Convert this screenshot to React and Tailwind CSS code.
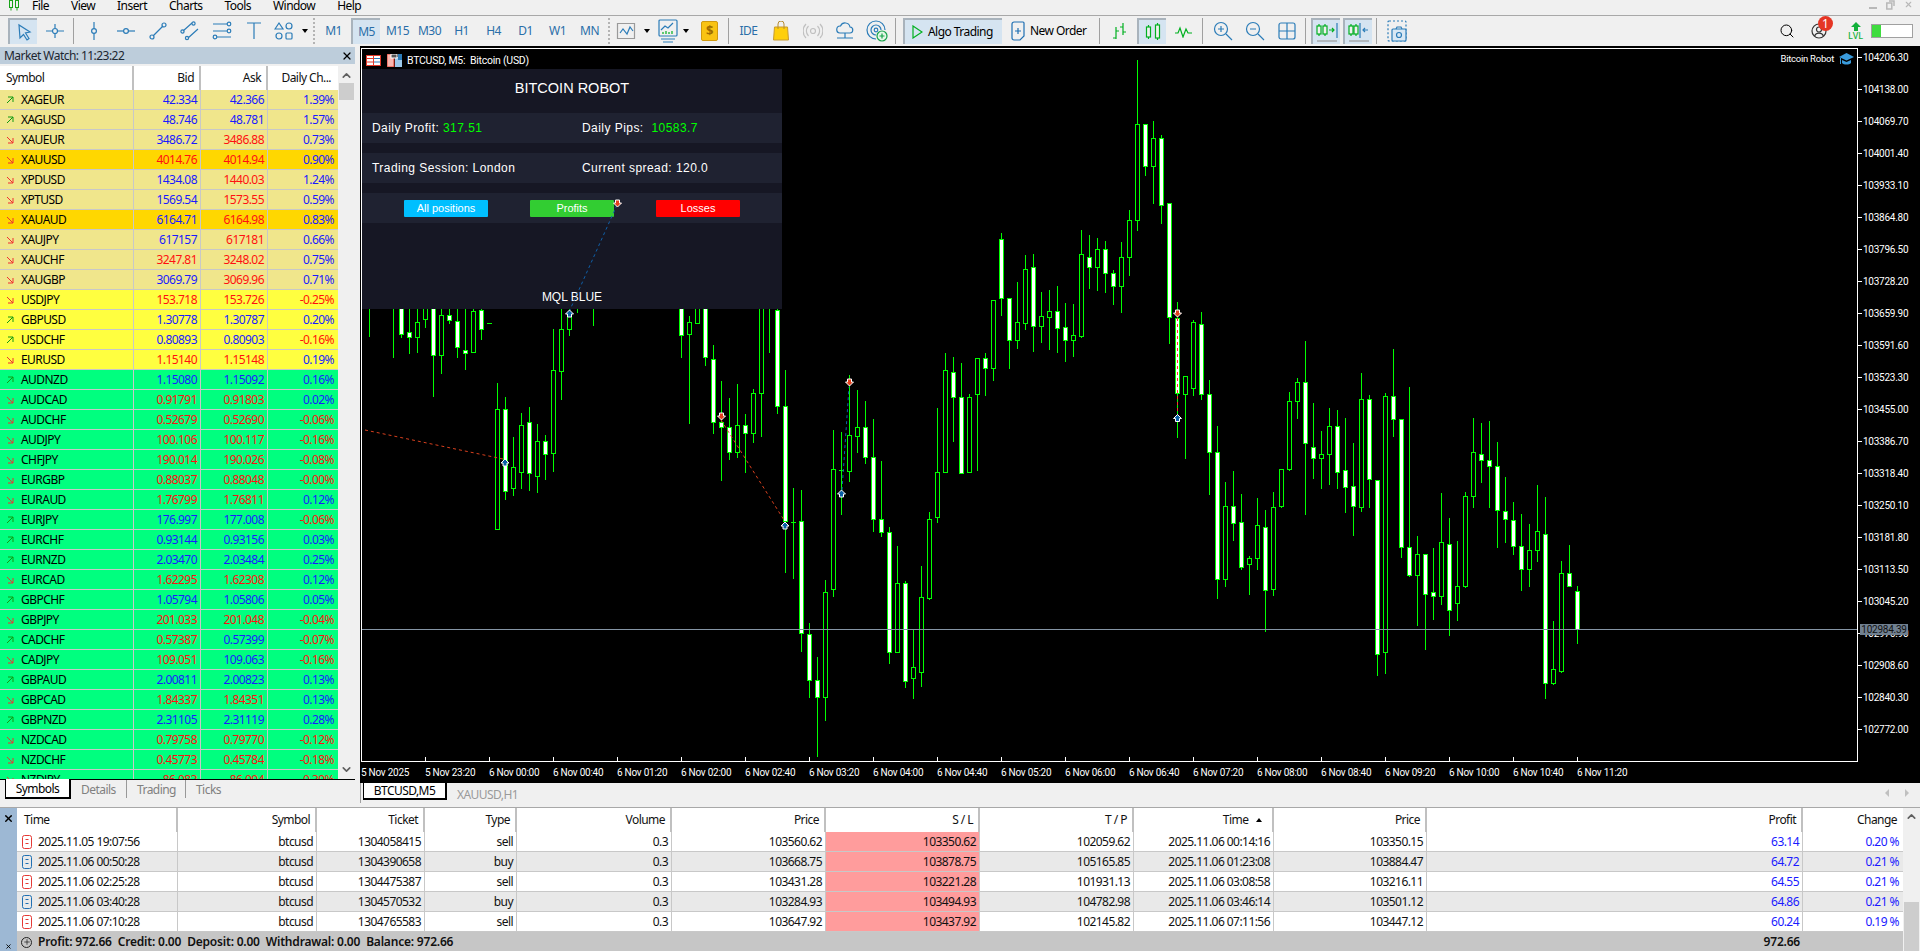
import { ChevronUp, ChevronDown, Search, X, Plus } from 'lucide-react';

const BLUE = '#2b7cb8';
const GREEN = '#00b020';

// symbol, up?, bid, ask, change, colours (b = blue, r = red), row background
const KHAKI = 'bg-[#f0e68c]';
const GOLD = 'bg-[#ffd700]';
const YELLOW = 'bg-[#ffff40]';
const SPRING = 'bg-[#00ff7f]';
const symbols = [
  ['XAGEUR', 1, '42.334', '42.366', '1.39%', 'bbb', KHAKI],
  ['XAGUSD', 1, '48.746', '48.781', '1.57%', 'bbb', KHAKI],
  ['XAUEUR', 0, '3486.72', '3486.88', '0.73%', 'brb', KHAKI],
  ['XAUUSD', 0, '4014.76', '4014.94', '0.90%', 'rrb', GOLD],
  ['XPDUSD', 0, '1434.08', '1440.03', '1.24%', 'brb', KHAKI],
  ['XPTUSD', 0, '1569.54', '1573.55', '0.59%', 'brb', KHAKI],
  ['XAUAUD', 0, '6164.71', '6164.98', '0.83%', 'brb', GOLD],
  ['XAUJPY', 0, '617157', '617181', '0.66%', 'brb', KHAKI],
  ['XAUCHF', 0, '3247.81', '3248.02', '0.75%', 'rrb', KHAKI],
  ['XAUGBP', 0, '3069.79', '3069.96', '0.71%', 'brb', KHAKI],
  ['USDJPY', 0, '153.718', '153.726', '-0.25%', 'rrr', YELLOW],
  ['GBPUSD', 1, '1.30778', '1.30787', '0.20%', 'bbb', YELLOW],
  ['USDCHF', 1, '0.80893', '0.80903', '-0.16%', 'bbr', YELLOW],
  ['EURUSD', 0, '1.15140', '1.15148', '0.19%', 'rrb', YELLOW],
  ['AUDNZD', 1, '1.15080', '1.15092', '0.16%', 'bbb', SPRING],
  ['AUDCAD', 0, '0.91791', '0.91803', '0.02%', 'rrb', SPRING],
  ['AUDCHF', 0, '0.52679', '0.52690', '-0.06%', 'rrr', SPRING],
  ['AUDJPY', 0, '100.106', '100.117', '-0.16%', 'rrr', SPRING],
  ['CHFJPY', 0, '190.014', '190.026', '-0.08%', 'rrr', SPRING],
  ['EURGBP', 0, '0.88037', '0.88048', '-0.00%', 'rrr', SPRING],
  ['EURAUD', 0, '1.76799', '1.76811', '0.12%', 'rrb', SPRING],
  ['EURJPY', 1, '176.997', '177.008', '-0.06%', 'bbr', SPRING],
  ['EURCHF', 1, '0.93144', '0.93156', '0.03%', 'bbb', SPRING],
  ['EURNZD', 1, '2.03470', '2.03484', '0.25%', 'bbb', SPRING],
  ['EURCAD', 0, '1.62295', '1.62308', '0.12%', 'rrb', SPRING],
  ['GBPCHF', 1, '1.05794', '1.05806', '0.05%', 'bbb', SPRING],
  ['GBPJPY', 0, '201.033', '201.048', '-0.04%', 'rrr', SPRING],
  ['CADCHF', 1, '0.57387', '0.57399', '-0.07%', 'rbr', SPRING],
  ['CADJPY', 0, '109.051', '109.063', '-0.16%', 'rbr', SPRING],
  ['GBPAUD', 1, '2.00811', '2.00823', '0.13%', 'bbb', SPRING],
  ['GBPCAD', 0, '1.84337', '1.84351', '0.13%', 'rrb', SPRING],
  ['GBPNZD', 1, '2.31105', '2.31119', '0.28%', 'bbb', SPRING],
  ['NZDCAD', 0, '0.79758', '0.79770', '-0.12%', 'rrr', SPRING],
  ['NZDCHF', 0, '0.45773', '0.45784', '-0.18%', 'rrr', SPRING],
  ['NZDJPY', 0, '86.083', '86.094', '-0.39%', 'rrr', SPRING],
];

const trades = [
  ['2025.11.05 19:07:56', '1304058415', 'sell', '103560.62', '103350.62', '102059.62', '2025.11.06 00:14:16', '103350.15', '63.14', '0.20 %'],
  ['2025.11.06 00:50:28', '1304390658', 'buy', '103668.75', '103878.75', '105165.85', '2025.11.06 01:23:08', '103884.47', '64.72', '0.21 %'],
  ['2025.11.06 02:25:28', '1304475387', 'sell', '103431.28', '103221.28', '101931.13', '2025.11.06 03:08:58', '103216.11', '64.55', '0.21 %'],
  ['2025.11.06 03:40:28', '1304570532', 'buy', '103284.93', '103494.93', '104782.98', '2025.11.06 03:46:14', '103501.12', '64.86', '0.21 %'],
  ['2025.11.06 07:10:28', '1304765583', 'sell', '103647.92', '103437.92', '102145.82', '2025.11.06 07:11:56', '103447.12', '60.24', '0.19 %'],
];

const prices = ['104206.30', '104138.00', '104069.70', '104001.40', '103933.10', '103864.80', '103796.50', '103728.20', '103659.90', '103591.60', '103523.30', '103455.00', '103386.70', '103318.40', '103250.10', '103181.80', '103113.50', '103045.20', '102976.90', '102908.60', '102840.30', '102772.00'];
const times = ['5 Nov 2025', '5 Nov 23:20', '6 Nov 00:00', '6 Nov 00:40', '6 Nov 01:20', '6 Nov 02:00', '6 Nov 02:40', '6 Nov 03:20', '6 Nov 04:00', '6 Nov 04:40', '6 Nov 05:20', '6 Nov 06:00', '6 Nov 06:40', '6 Nov 07:20', '6 Nov 08:00', '6 Nov 08:40', '6 Nov 09:20', '6 Nov 10:00', '6 Nov 10:40', '6 Nov 11:20'];

// [bar index, wick top, body top, body bottom, wick bottom, white body], read off the crops
const leftBars = [
  [1,0,0,0,107],[4,0,0,0,170],[5,0,0,103,112,1],[6,0,97,112,160,1],[7,0,65,112,155],[8,0,0,58,80],[9,0,0,165,287,1],
  [10,0,46,166,220],[11,0,46,60,70,1],[12,0,62,142,172,1],[13,0,150,160,207,1],[14,0,34,155,155],[15,0,30,88,118,1],[16,70,70,70,70],
  [17,250,328,686,686],[18,292,328,573,597,1],[19,412,502,565,585],[20,340,376,515,565],[21,320,367,520,570,1],[22,372,424,527,575],
  [23,405,424,463,537,1],[24,87,211,458,513],[25,0,88,212,298],[26,0,40,88,105],[27,0,0,0,35],[29,0,0,0,75],
  [40,0,0,106,170,1],[41,48,65,103,368],[42,0,0,68,68],[43,0,0,172,195,1],[44,135,178,365,398,1],[45,243,365,380,540,1],
  [46,293,380,455,477,1],[47,252,376,455,470],[48,343,376,398,515,1],[49,267,280,398,425],[50,0,0,280,408],[51,0,0,0,155],
  [52,0,30,317,340,1],[53,210,317,663,815,1],[54,565,665,665,835],[55,570,664,1000,1052,1],[56,968,1003,1141,1190,1],[57,1072,1141,1192,1367,1],
  [58,840,875,1190,1260],[59,390,508,868,888],[60,396,510,510,642],[61,225,406,513,543],[62,270,382,407,455],[63,303,382,470,488,1],
  [64,357,470,658,693,1],[65,483,658,697,707,1],[66,682,697,1055,1088,1],[67,738,850,1055,1055],[68,842,850,1143,1160,1],[69,988,1102,1135,1193],
  [70,798,892,1117,1157],[71,636,658,893,897],[72,323,517,652,665],[73,160,211,517,517],[74,172,217,292,423,1],[75,190,292,520,520,1],
  [76,282,292,517,517],[77,175,175,281,510],[78,160,175,205,285,1],[79,0,0,205,240],
];
const rightBars = [
  [80,410,421,546,583,1],[81,546,546,635,696,1],[82,513,598,635,652],[83,456,486,600,612],[84,453,482,607,660,1],[85,535,584,607,640],
  [86,530,575,587,655],[87,521,575,611,662,1],[88,557,609,635,681,1],[89,559,626,635,670],[90,403,454,628,630],[91,413,459,482,525,1],
  [92,420,443,481,530],[93,425,443,493,535,1],[94,487,493,522,560,1],[95,428,459,522,576],[96,360,382,459,497],[97,42,179,382,403],
  [98,177,177,268,286,1],[99,172,208,268,345],[100,202,208,349,388,1],[101,346,346,588,642,1],[102,555,590,748,842,1],[103,711,711,751,885],
  [104,593,598,738,752],[105,576,601,751,760,1],[106,720,751,874,962,1],[107,818,874,1143,1183,1],[108,937,988,1143,1158],[109,913,988,1024,1060,1],
  [110,963,1022,1116,1120,1],[111,1093,1098,1111,1173],[112,970,1027,1098,1120],[113,995,1033,1166,1252,1],[114,958,990,1164,1175],[115,908,910,988,990],
  [116,745,764,910,912],[117,716,725,764,800],[118,638,724,855,1005,1],[119,770,863,885,928,1],[120,828,878,885,950],[121,780,817,878,940],
  [122,785,818,916,950,1],[123,802,912,947,1000,1],[124,853,945,988,1048,1],[125,706,760,990,998],[126,752,760,931,990,1],[127,933,933,1302,1345,1],
  [128,748,755,1296,1342],[129,655,755,804,840,1],[130,804,804,1075,1095,1],[131,735,1075,1133,1135,1],[132,1052,1090,1133,1240],[133,1090,1090,1174,1290,1],
  [134,1076,1170,1178,1227,1],[135,960,1063,1178,1195],[136,1012,1068,1207,1260,1],[137,1062,1158,1192,1228],[138,958,966,1156,1160],[139,800,874,966,990],
  [140,812,878,890,937,1],[141,808,889,902,990,1],[142,852,902,995,1075,1],[143,926,997,1016,1063,1],[144,980,1018,1073,1090,1],[145,1005,1073,1120,1165,1],
  [146,1025,1080,1120,1158],[147,943,1040,1080,1104],[148,968,1046,1363,1395,1],[149,1232,1332,1363,1365],[150,1105,1130,1338,1340],[151,1070,1130,1158,1158,1],
  [152,1158,1168,1248,1278,1],
];

const bars = [
  ...leftBars.map(([k, ...r]) => [k, ...r.slice(0, 4).map((v) => 300 + v / 3), r[4]]),
  ...rightBars.map(([k, ...r]) => [k, ...r.slice(0, 4).map((v) => 40 + v / 2.119), r[4]]),
];

function Candle({ k, wt, bt, bb, wb, white }) {
  const x = 361 + 8 * k;
  const top = Math.round(bt);
  const height = Math.round(bb) - top;
  return (
    <g>
      <line x1={x + 0.5} x2={x + 0.5} y1={Math.round(wt)} y2={Math.round(wb) + 1} stroke="#00ff00" />
      {height === 0 ? (
        <line x1={x - 2} x2={x + 3} y1={top + 0.5} y2={top + 0.5} stroke="#00ff00" />
      ) : (
        <rect x={x - 1.5} y={top + 0.5} width="4" height={height} fill={white ? '#fff' : '#000'} stroke="#00ff00" />
      )}
    </g>
  );
}

function Marker({ x, y, up }) {
  const d = up ? 1 : -1;
  const pts = [[0, -4], [4, 0], [2, 0], [2, 3], [-2, 3], [-2, 0], [-4, 0]].map(([a, b]) => `${x + a},${y + b * d}`).join(' ');
  return <polygon points={pts} fill={up ? '#0b5fa5' : '#e2401c'} stroke="#fff" strokeWidth="1" />;
}

function Icon({ w = 20, h = 20, children, className = '' }) {
  return (
    <svg width={w} height={h} viewBox={`0 0 ${w} ${h}`} fill="none" stroke={BLUE} strokeWidth="1.2" className={className}>
      {children}
    </svg>
  );
}

function Btn({ active, w = 'w-[29px]', children }) {
  return (
    <div className={`${w} h-[26px] shrink-0 flex items-center justify-center ${active ? 'bg-[#d5e4f1] border-t-2 border-l-2 border-[#a9b3bc]' : ''} text-[#2a6ea8]`}>
      {children}
    </div>
  );
}

const Sep = ({ className = 'ml-[1px] mr-[2px]' }) => <div className={`w-px h-[26px] bg-[#a0a0a0] shrink-0 ${className}`} />;
const Grip = ({ className }) => <div className={`w-[2px] h-[26px] shrink-0 border-l-2 border-dotted border-[#b4b4b4] ${className}`} />;
const Caret = () => <span className="block w-0 h-0 border-x-[3.5px] border-x-transparent border-t-[4px] border-t-black" />;

function CandleGlyph({ x, top = 4, h = 12 }) {
  return (
    <g stroke={GREEN}>
      <line x1={x} x2={x} y1={top - 2} y2={top + h + 2} />
      <rect x={x - 2} y={top} width="4" height={h} fill="#f0f0f0" />
    </g>
  );
}

function Toolbar() {
  const periods = ['M1', 'M5', 'M15', 'M30', 'H1', 'H4', 'D1', 'W1', 'MN'];
  return (
    <div className="h-[31px] border-t border-[#a8a8a8] flex items-center gap-[3px] pl-[8px] pr-[7px]">
      <Btn active>
        <Icon><path d="M5 3 L6 16 L9.5 12.5 L13 18 L15 16.5 L11.5 11 L16 10 Z" /></Icon>
      </Btn>
      <Btn>
        <Icon><path d="M1 10h6M13 10h6M10 3v4M10 13v4" /><circle cx="10" cy="10" r="2.5" /></Icon>
      </Btn>
      <Sep />
      <Btn>
        <Icon><path d="M10 1v18" /><circle cx="10" cy="10" r="2.4" fill="#f0f0f0" /></Icon>
      </Btn>
      <Btn>
        <Icon><path d="M1 10h18" /><circle cx="10" cy="10" r="2.4" fill="#f0f0f0" /></Icon>
      </Btn>
      <Btn>
        <Icon><path d="M5 15L15 5" /><circle cx="16" cy="4" r="2" /><circle cx="4" cy="16" r="2" /></Icon>
      </Btn>
      <Btn>
        <Icon><path d="M3 10L12 2M8 17L18 8" /><circle cx="13.5" cy="2.5" r="1.6" /><circle cx="2.5" cy="10.5" r="1.6" /><circle cx="7" cy="17" r="1.6" /></Icon>
      </Btn>
      <Btn>
        <Icon><path d="M1 3h14M1 10h14M5 16h14" /><circle cx="17" cy="3" r="1.8" /><circle cx="17" cy="10" r="1.8" /><circle cx="3" cy="16" r="1.8" /></Icon>
      </Btn>
      <Btn>
        <Icon><path d="M3 2h14M10 2v16" /></Icon>
      </Btn>
      <div className="w-[37px] h-[26px] shrink-0 flex items-center justify-between">
        <Icon w={20} h={20} className="ml-[3px]">
          <path d="M5 2L9 8H1Z" /><circle cx="15" cy="5" r="3" /><circle cx="5" cy="15" r="3" /><rect x="12" y="12" width="6" height="6" rx="1" />
        </Icon>
        <Caret />
      </div>
      <Grip className="ml-[2px] mr-[1px]" />
      {periods.map((p) => (
        <Btn key={p} active={p === 'M5'}>{p}</Btn>
      ))}
      <Grip className="ml-[1px]" />
      <div className="w-[37px] h-[26px] shrink-0 flex items-center justify-between">
        <Icon w={22} h={20} className="ml-[3px]"><path d="M1.5 2.5h17v15h-17z" stroke="#9a9a9a" /><path d="M4 12l3-4 4 5 3-7 3 4" /></Icon>
        <Caret />
      </div>
      <div className="w-[39px] h-[26px] shrink-0 flex items-center justify-between pr-[3px]">
        <Icon w={22} h={24} className="ml-[4px]">
          <rect x="2" y="1" width="18" height="16" rx="1" />
          <path d="M4 11l4-4 3 2 5-5" />
          <path d="M6 15v-2M9 15v-3M12 15v-2M15 15v-3" stroke={GREEN} />
          <path d="M4 20h14M6 23h10" />
        </Icon>
        <Caret />
      </div>
      <Btn>
        <div className="w-[17px] h-[20px] rounded-[2px] bg-[#f9c313] border border-[#d09a10] flex items-center justify-center text-[13px] font-bold text-[#a06c00]">$</div>
      </Btn>
      <Sep />
      <Btn>IDE</Btn>
      <Btn>
        <svg width="16" height="20" viewBox="0 0 16 20">
          <path d="M1.5 6h13l1 13H.5Z" fill="#ffcf0a" stroke="#c79a2e" />
          <path d="M5 8V3a3 3 0 0 1 6 0v5" fill="none" stroke="#b68c30" />
        </svg>
      </Btn>
      <Btn>
        <Icon w={20} h={20}>
          <g stroke="#c0c0c0"><circle cx="10" cy="10" r="2.5" /><path d="M5.5 5a7 7 0 0 0 0 10M14.5 5a7 7 0 0 1 0 10M3 3a10 10 0 0 0 0 14M17 3a10 10 0 0 1 0 14" /></g>
        </Icon>
      </Btn>
      <Btn>
        <Icon w={20} h={20}>
          <path d="M5 12a3.5 3.5 0 0 1 .5-7 5 5 0 0 1 9.5 1 3 3 0 0 1-.5 6Z" />
          <path d="M10 12v5M2 17h16" />
        </Icon>
      </Btn>
      <Btn>
        <Icon w={22} h={22}>
          <path d="M10 19a9 9 0 1 1 9-9M10 15a5 5 0 1 1 5-5" /><circle cx="10" cy="10" r="1.8" />
          <circle cx="16" cy="16" r="5" stroke="#16a34a" fill="#e4f7e8" />
          <path d="M16 13.5v5M13.5 16h5" stroke="#16a34a" />
        </Icon>
      </Btn>
      <Sep />
      <div className="ml-[2px] w-[99px] h-[26px] shrink-0 bg-[#d5e4f1] border-t-2 border-l-2 border-[#a9b3bc] flex items-center pl-[7px] gap-[5px] text-black">
        <svg width="11" height="14" viewBox="0 0 11 14" fill="none" stroke={GREEN} strokeWidth="1.2"><path d="M1 1l9 6-9 6Z" /></svg>
        Algo Trading
      </div>
      <div className="w-[89px] h-[26px] shrink-0 flex items-center pl-[6px] gap-[5px] text-black">
        <svg width="14" height="20" viewBox="0 0 14 20" fill="none" stroke="#1f6fb2" strokeWidth="1.2">
          <path d="M1 3a2 2 0 0 1 2-2h9a1 1 0 0 1 1 1v13l-4 4H3a2 2 0 0 1-2-2ZM4 10h6M7 7v6" />
        </svg>
        New Order
      </div>
      <Sep className="ml-[2px] mr-[2px]" />
      <Btn>
        <Icon w={16} h={20}>
          <g stroke={GREEN}><path d="M4 6v12M1 17h3M4 10h3M11 2v12M8 6h3M11 11h3" /></g>
        </Icon>
      </Btn>
      <Btn active>
        <Icon w={16} h={20}><CandleGlyph x={3.5} top={5} h={10} /><CandleGlyph x={12.5} top={3} h={13} /></Icon>
      </Btn>
      <Btn>
        <Icon w={18} h={14}><path d="M0 9h3l2-5 3 9 3-8 2 4h4" stroke={GREEN} /></Icon>
      </Btn>
      <Sep />
      <Btn>
        <Icon w={20} h={20}><circle cx="8" cy="8" r="6.5" /><path d="M13 13l6 6M5 8h6M8 5v6" /></Icon>
      </Btn>
      <Btn>
        <Icon w={20} h={20}><circle cx="8" cy="8" r="6.5" /><path d="M13 13l6 6M5 8h6" /></Icon>
      </Btn>
      <Btn>
        <Icon w={18} h={18}><rect x="1" y="1" width="16" height="16" rx="2" /><path d="M1 9h16M9 1v16" /></Icon>
      </Btn>
      <Sep />
      <Btn active>
        <Icon w={22} h={22}>
          <CandleGlyph x={3} top={5} h={8} /><CandleGlyph x={9} top={5} h={8} />
          <path d="M13 9h5M16 7l2 2-2 2" stroke={GREEN} /><path d="M21 2v15" /><path d="M1 20h20" stroke="#9a9a9a" />
        </Icon>
      </Btn>
      <Btn active>
        <Icon w={22} h={22}>
          <CandleGlyph x={3} top={5} h={8} /><CandleGlyph x={8} top={5} h={8} />
          <path d="M12 2v15M20 9h-5M17 7l-2 2 2 2" /><path d="M1 20h20" stroke="#9a9a9a" />
        </Icon>
      </Btn>
      <Sep />
      <Btn>
        <Icon w={20} h={22}>
          <rect x="1" y="1" width="18" height="20" rx="1" strokeDasharray="2 2" />
          <rect x="5" y="9" width="14" height="12" rx="1" fill="#d8e8f4" />
          <circle cx="12" cy="15" r="2.5" /><path d="M9 9l1-2h4l1 2" />
        </Icon>
      </Btn>
      <div className="ml-auto flex items-center">
        <div className="w-[29px] flex justify-center">
          <Search size={16} strokeWidth={1.5} className="text-black" />
        </div>
        <div className="relative w-[29px] ml-[3px] mr-[10px] flex justify-center">
          <Icon w={16} h={16}>
            <g stroke="#333"><circle cx="8" cy="8" r="7" /><circle cx="8" cy="6.5" r="2.5" /><path d="M3.5 13a5 5 0 0 1 9 0" /></g>
          </Icon>
          <span className="absolute -top-[7px] left-[14px] w-[15px] h-[15px] rounded-full bg-[#e53524] text-white text-[12px] tracking-normal leading-[15px] text-center">1</span>
        </div>
        <div className="w-[25px] flex flex-col items-center text-[#12b03a]">
          <svg width="12" height="9" viewBox="0 0 12 9" fill="#12b03a"><path d="M6 0l5 5H8v4H4V5H1Z" /></svg>
          <span className="text-[9px] leading-[9px] tracking-normal font-medium">LVL</span>
        </div>
        <div className="ml-[3px] w-[42px] h-[14px] bg-white border border-[#a0a0a0] flex">
          <div className="w-[9px] bg-[#3fdc3f]" />
        </div>
      </div>
    </div>
  );
}

function MenuBar() {
  return (
    <div className="h-[15px] flex items-start overflow-hidden relative leading-[11px] text-black">
      <svg width="12" height="12" viewBox="0 0 12 12" fill="none" stroke="#19a319" className="ml-[8px] -mt-[1px]">
        <rect x="1.5" y="1.5" width="3" height="7" /><rect x="7.5" y="1.5" width="3" height="7" /><path d="M3 8.5v3M9 8.5v3" />
      </svg>
      <div className="flex gap-[22px] ml-[12px]">
        {['File', 'View', 'Insert', 'Charts', 'Tools', 'Window', 'Help'].map((m) => (
          <span key={m}>{m}</span>
        ))}
      </div>
      <div className="ml-auto flex items-start gap-[9px] pr-[7px] text-[#b8b8b8]">
        <svg width="8" height="10" viewBox="0 0 8 10" stroke="currentColor" strokeWidth="2"><path d="M0 8h8" /></svg>
        <svg width="9" height="10" viewBox="0 0 9 10" fill="none" stroke="currentColor" strokeWidth="1.5"><rect x="0.8" y="3" width="5" height="6" /><path d="M3 1h5v5" /></svg>
        <X size={9} strokeWidth={3} />
      </div>
    </div>
  );
}

function MarketRow({ row }) {
  const [name, up, bid, ask, change, cols, bg] = row;
  const color = (i) => (cols[i] === 'b' ? 'text-[#1a1aff]' : 'text-[#ff1010]');
  return (
    <div className={`grid grid-cols-[134px_67px_67px_70px] h-[20px] shrink-0 border-b border-[#c8c8c8] leading-[19px] ${bg}`}>
      <div className="border-r border-[#c8c8c8] flex items-center pl-[6px] gap-[7px] text-black">
        <svg width="8" height="8" viewBox="0 0 8 8" fill="none" stroke={up ? '#129a12' : '#f03030'} strokeWidth="1">
          {up ? <path d="M1 7L7 1M2 1h5v5" /> : <path d="M1 1l6 6M2 7h5V2" />}
        </svg>
        {name}
      </div>
      <div className={`border-r border-[#c8c8c8] text-right pr-[3px] ${color(0)}`}>{bid}</div>
      <div className={`border-r border-[#c8c8c8] text-right pr-[3px] ${color(1)}`}>{ask}</div>
      <div className={`text-right pr-[4px] ${color(2)}`}>{change}</div>
    </div>
  );
}

function MarketWatch() {
  return (
    <div className="w-[360px] shrink-0 flex flex-col pt-[1px]">
      <div className="w-[355px] h-[17px] bg-[#bdcddb] flex items-center justify-between pl-[4px] pr-[2px] text-[#1c2630]">
        Market Watch: 11:23:22
        <X size={12} strokeWidth={2.5} className="text-black" />
      </div>
      <div className="w-[355px] h-[714px] mt-[2px] flex overflow-hidden border-b border-black">
        <div className="w-[338px] flex flex-col">
          <div className="grid grid-cols-[134px_67px_67px_70px] h-[24px] shrink-0 bg-white leading-[24px] text-[#111]">
            <div className="border-r-2 border-[#c0c0c0] pl-[6px]">Symbol</div>
            <div className="border-r-2 border-[#c0c0c0] text-right pr-[5px]">Bid</div>
            <div className="border-r-2 border-[#c0c0c0] text-right pr-[5px]">Ask</div>
            <div className="text-right pr-[7px]">Daily Ch...</div>
          </div>
          {symbols.map((row) => (
            <MarketRow key={row[0]} row={row} />
          ))}
        </div>
        <div className="flex-1 flex flex-col items-center bg-[#f0f0f0] pt-[3px] text-[#606060]">
          <ChevronUp size={13} strokeWidth={3} />
          <div className="w-[15px] h-[17px] bg-[#cdcdcd] mt-[1px]" />
          <ChevronDown size={13} strokeWidth={3} className="mt-auto mb-[3px]" />
        </div>
      </div>
      <div className="flex-1 flex items-start pl-[5px] text-[#808080] leading-[20px]">
        <div className="w-[66px] h-[20px] -mt-px bg-white border border-t-0 border-black border-b-2 border-r-2 text-black text-center">Symbols</div>
        <span className="ml-[10px] w-[35px]">Details</span>
        <span className="ml-[10px] mr-[10px] w-px h-[18px] bg-[#999]" />
        <span className="w-[38px]">Trading</span>
        <span className="ml-[10px] mr-[10px] w-px h-[18px] bg-[#999]" />
        <span>Ticks</span>
      </div>
    </div>
  );
}

function PanelRow({ left, right }) {
  return (
    <div className="h-[30px] bg-[#1f2231] flex items-center pl-[10px]">
      <div className="w-[210px]">{left}</div>
      <div>{right}</div>
    </div>
  );
}

function RobotPanel() {
  const btn = 'w-[84px] h-[17px] rounded-[1px] flex items-center justify-center text-[11px] tracking-normal text-white';
  return (
    <div className="absolute left-0 top-[20px] w-[420px] h-[240px] bg-[#161724] flex flex-col font-['Liberation_Sans',sans-serif] text-[12px] tracking-[0.45px] text-white">
      <div className="h-[44px] pb-[4px] flex items-center justify-center text-[14.5px] font-light tracking-normal">BITCOIN ROBOT</div>
      <div className="flex flex-col gap-[10px]">
        <PanelRow left={<>Daily Profit: <span className="text-[#00ff00]">317.51</span></>} right={<>Daily Pips: <span className="ml-[4px] text-[#00ff00]">10583.7</span></>} />
        <PanelRow left="Trading Session: London" right="Current spread: 120.0" />
        <div className="h-[30px] bg-[#1f2231] flex items-center justify-center gap-[42px]">
          <div className={`${btn} bg-[#00bfff]`}>All positions</div>
          <div className={`${btn} bg-[#32cd32]`}>Profits</div>
          <div className={`${btn} bg-[#ff0000]`}>Losses</div>
        </div>
      </div>
      <div className="mt-auto h-[24px] flex items-center justify-center tracking-normal">MQL BLUE</div>
    </div>
  );
}

function Chart() {
  return (
    <div className="h-[737px] shrink-0 bg-black pt-[2px] flex flex-col overflow-hidden font-['Roboto',sans-serif] tracking-[-0.25px]">
      <div className="flex h-[714px] pl-[1px]">
        <div className="relative w-[1497px] h-[714px] border border-white overflow-hidden">
          <svg className="absolute inset-0" width="1495" height="712" viewBox="362 49 1495 712" shapeRendering="crispEdges">
            {bars.map(([k, wt, bt, bb, wb, white]) => (
              <Candle key={k} k={k} wt={wt} bt={bt} bb={bb} wb={wb} white={white} />
            ))}
            <line x1="362" x2="1857" y1="629.5" y2="629.5" stroke="#8595a5" />
          </svg>
          <RobotPanel />
          <svg className="absolute inset-0" width="1495" height="712" viewBox="362 49 1495 712">
            <g fill="none" strokeDasharray="3 3">
              <path d="M365 430L503 459M721 420L784 520" stroke="#d8401e" />
              <path d="M617 205L569 312M842 490L849 387" stroke="#0f5fa8" />
              <path d="M1177.5 318V415" stroke="#ff3030" />
            </g>
            <Marker x={505} y={463} up />
            <Marker x={569.5} y={314} up />
            <Marker x={785} y={526} up />
            <Marker x={841.5} y={494} up />
            <Marker x={1177.5} y={418.5} up />
            <Marker x={617.5} y={203} />
            <Marker x={721.5} y={416} />
            <Marker x={849.5} y={382} />
            <Marker x={1177.5} y={313} />
          </svg>
          <div className="absolute left-[4px] top-[4px] flex items-center text-[10.5px] text-white">
            <svg width="15" height="11" viewBox="0 0 15 11">
              <rect x="0.5" y="0.5" width="14" height="10" fill="#fff" stroke="#e33a2a" />
              <path d="M1 3.5h6M1 7h6" stroke="#e33a2a" /><path d="M8 3.5h6M8 7h6" stroke="#2b7cb8" /><path d="M7.5 1v9" stroke="#e33a2a" />
            </svg>
            <svg width="15" height="13" viewBox="0 0 15 13" className="ml-[6px]">
              <rect x="0" y="0" width="7" height="13" fill="#f8b8b0" stroke="#e33a2a" />
              <rect x="8" y="3" width="7" height="10" fill="#9cc9ea" />
              <rect x="4" y="0" width="6" height="4" fill="#555" stroke="#fff" />
              <rect x="11" y="0" width="4" height="6" fill="#2b7cb8" />
            </svg>
            <span className="ml-[5px]">BTCUSD, M5:&nbsp; Bitcoin (USD)</span>
          </div>
          <div className="absolute right-[3px] top-[3px] flex items-center text-[9.5px] text-white">
            Bitcoin Robot
            <svg width="15" height="14" viewBox="0 0 15 14" className="ml-[5px]" fill="#3a9bdc">
              <path d="M7.5 1L15 5 7.5 8.5 0 5Z" /><path d="M3 8v3c2 2 7 2 9 0V8L7.5 10Z" /><path d="M1 6v6h1V6Z" />
            </svg>
          </div>
        </div>
        <div className="relative flex-1 overflow-visible text-[10px] text-white">
          <div className="flex flex-col -mt-[7px]">
            {prices.map((p) => (
              <div key={p} className="h-[32px] flex items-center">
                <span className="w-[4px] h-px bg-white mr-[1px]" />
                {p}
              </div>
            ))}
          </div>
          <div className="absolute left-[2px] top-[576px] w-[48px] h-[11px] bg-[#708090] text-[#111] leading-[11px] text-center">102984.39</div>
        </div>
      </div>
      <div className="flex pl-[1px] text-[10px] text-white">
        {times.map((t) => (
          <div key={t} className="relative w-[64px] shrink-0 pt-[3px] whitespace-nowrap">
            <span className="absolute left-0 -top-[5px] w-px h-[5px] bg-white" />
            {t}
          </div>
        ))}
      </div>
    </div>
  );
}

function ChartTabs() {
  return (
    <div className="h-[24px] flex items-start">
      <div className="w-px h-[20px] bg-[#a0a0a0]" />
      <div className="ml-[2px] -mt-[1px] w-[84px] h-[18px] bg-white border border-black border-r-2 border-b-2 text-center leading-[16px] text-black">BTCUSD,M5</div>
      <span className="ml-[10px] mt-[3px] text-[#9a9a9a]">XAUUSD,H1</span>
      <div className="ml-auto mr-[11px] mt-[6px] flex gap-[16px]">
        <span className="w-0 h-0 border-y-[4px] border-y-transparent border-r-[4px] border-r-[#c0c0c0]" />
        <span className="w-0 h-0 border-y-[4px] border-y-transparent border-l-[4px] border-l-[#c0c0c0]" />
      </div>
    </div>
  );
}

const COLS = 'grid-cols-[161px_139px_108px_92px_155px_154px_154px_154px_140px_153px_376px_100px]';

function Toolbox() {
  const head = 'border-r-2 border-[#c0c0c0] text-right pr-[5px]';
  const cell = 'border-r border-[#c8c8c8] text-right pr-[3px]';
  return (
    <div className="h-[144px] flex border-t border-[#a8a8a8] text-[#111]">
      <div className="w-[17px] bg-[#9db8d4] flex flex-col items-center justify-between pt-[5px] pr-[1px] pb-[1px] text-black">
        <X size={11} strokeWidth={3} />
        <X size={7} strokeWidth={3} />
      </div>
      <div className="w-[1886px] flex flex-col bg-white">
        <div className={`grid ${COLS} h-[24px] leading-[24px]`}>
          <div className={`${head} !text-left pl-[7px]`}>Time</div>
          <div className={head}>Symbol</div>
          <div className={head}>Ticket</div>
          <div className={head}>Type</div>
          <div className={head}>Volume</div>
          <div className={head}>Price</div>
          <div className={head}>S / L</div>
          <div className={head}>T / P</div>
          <div className={`${head} pr-[10px]`}>Time <span className="inline-block ml-[5px] mb-[2px] w-0 h-0 border-x-[3.5px] border-x-transparent border-b-[4px] border-b-black" /></div>
          <div className={head}>Price</div>
          <div className={head}>Profit</div>
          <div className="text-right pr-[6px]">Change</div>
        </div>
        {trades.map((t, i) => {
          const sell = t[2] === 'sell';
          return (
            <div key={t[1]} className={`grid ${COLS} h-[20px] leading-[19px] border-b border-[#c8c8c8] ${i % 2 ? 'bg-[#e9e9e9]' : 'bg-white'}`}>
              <div className="border-r border-[#c8c8c8] flex items-center pl-[5px] gap-[6px]">
                <svg width="10" height="14" viewBox="0 0 10 14" fill="none" stroke={sell ? '#e53935' : '#1f6fb2'}>
                  <rect x="0.5" y="0.5" width="9" height="13" rx="2" /><path d="M3.5 4.5h3M3.5 8.5h3" />
                </svg>
                {t[0]}
              </div>
              <div className={cell}>btcusd</div>
              <div className={cell}>{t[1]}</div>
              <div className={cell}>{t[2]}</div>
              <div className={cell}>0.3</div>
              <div className={cell}>{t[3]}</div>
              <div className={`${cell} bg-[#ff9c9c]`}>{t[4]}</div>
              <div className={cell}>{t[5]}</div>
              <div className={cell}>{t[6]}</div>
              <div className={cell}>{t[7]}</div>
              <div className={`${cell} text-[#1a1aff]`}>{t[8]}</div>
              <div className="text-right pr-[4px] text-[#1a1aff]">{t[9]}</div>
            </div>
          );
        })}
        <div className={`grid ${COLS} h-[20px] bg-[#c6c6c6] font-semibold tracking-[-0.2px] leading-[20px]`}>
          <div className="col-span-11 flex items-center pl-[4px] pr-[3px]">
            <span className="w-[11px] h-[11px] mr-[6px] rounded-full border border-[#222] flex items-center justify-center">
              <Plus size={8} strokeWidth={2} />
            </span>
            <span className="flex gap-[6px]">
              <span>Profit: 972.66</span>
              <span>Credit: 0.00</span>
              <span>Deposit: 0.00</span>
              <span>Withdrawal: 0.00</span>
              <span>Balance: 972.66</span>
            </span>
            <span className="ml-auto">972.66</span>
          </div>
        </div>
      </div>
      <div className="flex-1 flex flex-col items-center pt-[2px] bg-[#f0f0f0] text-[#606060]">
        <ChevronUp size={13} strokeWidth={3} />
        <div className="w-[15px] h-[49px] bg-[#cdcdcd] mt-auto" />
      </div>
    </div>
  );
}

export default function App() {
  return (
    <div className="w-[1920px] h-[951px] overflow-hidden bg-[#f0f0f0] flex flex-col font-['Noto_Sans',sans-serif] text-[12px] tracking-[-0.55px]">
      <MenuBar />
      <Toolbar />
      <div className="flex h-[761px]">
        <MarketWatch />
        <div className="flex-1 flex flex-col">
          <Chart />
          <ChartTabs />
        </div>
      </div>
      <Toolbox />
    </div>
  );
}
